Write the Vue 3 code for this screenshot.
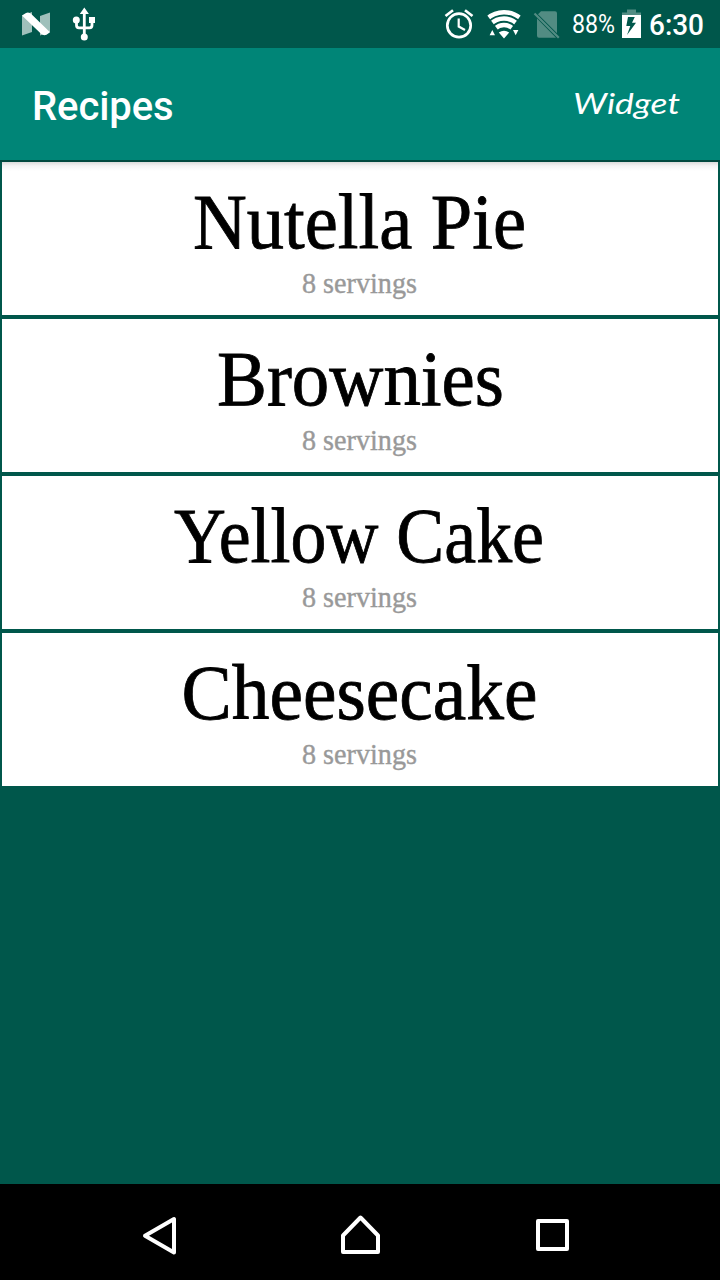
<script setup>
const recipes = [
  { name: 'Nutella Pie', x: 193, width: 333, servings: 8 },
  { name: 'Brownies', x: 217, width: 287, servings: 8 },
  { name: 'Yellow Cake', x: 174, width: 370, servings: 8 },
  { name: 'Cheesecake', x: 181.5, width: 356, servings: 8 }
]
</script>

<template>
  <div class="screen">
    <header class="status">
      <svg width="720" height="48" viewBox="0 0 720 48">
        <path d="M22 15.5 32 12V32L22 35.5ZM40 16 50 12.5V32L40 35.5Z" fill="#9fc0bb" />
        <path d="M22 15.5 26 13Q29 11.8 31.5 14.3L50 32.3 46.5 34.7Q43.5 36 41 33.7Z" fill="#fff" />
        <g fill="none" stroke="#fff" stroke-width="2.8">
          <path d="M84.3 12V37M76.5 20V25.3Q76.5 27.8 79 27.8H89.5Q92 27.8 92 25.3V20" />
        </g>
        <path d="M84.3 7.5 88.9 14H79.8ZM89 17H95V23H89Z" fill="#fff" />
        <circle cx="76.3" cy="20" r="3.5" fill="#fff" />
        <circle cx="84.3" cy="37" r="3.5" fill="#fff" />

        <g fill="none" stroke="#fff" stroke-width="2.7">
          <circle cx="459" cy="25.4" r="11.7" />
          <path d="M445.5 16 453 10.2M472.5 16 465 10.2" />
          <path d="M458.7 18.5V26.5L465 30" stroke-width="2.2" />
        </g>

        <clipPath id="fan"><path d="M504 38 486.5 14.5Q504 3 521.5 14.5Z" /></clipPath>
        <g clip-path="url(#fan)" fill="none" stroke="#fff" stroke-width="4.5">
          <circle cx="504" cy="37.5" r="25.3" />
          <circle cx="504" cy="37.5" r="18.9" />
          <circle cx="504" cy="37.5" r="12.5" />
        </g>
        <path d="M504 38.5 498.8 32.5Q504 29 509.2 32.5ZM492.3 30 495 35.2H489.6ZM515.7 35.2 518.4 30H513Z" fill="#fff" />

        <path d="M541 11.2H555Q557 11.2 557 13.2V33.2L538 14.2ZM537 18.5 556 37.8H539Q537 37.8 537 35.8Z" fill="#528c83" />
        <path d="M534.5 13.5 558.8 37.8" stroke="#528c83" stroke-width="2.2" />

        <text x="572" y="33" textLength="43" lengthAdjust="spacingAndGlyphs" class="percent">88%</text>
        <path d="M622 15V12.5H627V9.5H636V12.5H641V15Z" fill="#528c83" />
        <path fill-rule="evenodd" d="M622 15H641V38H622ZM628 17 626.3 26H630.3L627 35 636 22.7H632L634.8 17Z" fill="#fff" />
        <text x="649" y="35" textLength="55" lengthAdjust="spacingAndGlyphs" class="clock">6:30</text>
      </svg>
    </header>

    <div class="toolbar">
      <h1>Recipes</h1>
      <svg class="action" width="120" height="48" viewBox="0 0 120 48">
        <text x="3" y="31" textLength="107" lengthAdjust="spacingAndGlyphs">Widget</text>
      </svg>
    </div>

    <main class="list">
      <article v-for="recipe in recipes" :key="recipe.name" class="card">
        <svg width="716" height="153" viewBox="2 0 716 153">
          <text class="name" :x="recipe.x" y="86" :textLength="recipe.width" lengthAdjust="spacingAndGlyphs">{{ recipe.name }}</text>
          <text class="servings" x="302" y="130.5" textLength="115" lengthAdjust="spacingAndGlyphs">{{ recipe.servings }} servings</text>
        </svg>
      </article>
    </main>

    <nav class="nav">
      <svg width="720" height="96" viewBox="0 0 720 96" fill="none" stroke="#fff" stroke-width="4" stroke-linejoin="round">
        <path d="M174 35V68.5L145 51.7Z" />
        <path d="M343 51.5 360.5 33.5 378 51.5V68H343Z" />
        <path d="M538 37H567V65H538Z" />
      </svg>
    </nav>
  </div>
</template>

<style>
html,
body {
  margin: 0;
  background: #00574b;
}
</style>

<style scoped>
.screen {
  width: 720px;
  height: 1280px;
  display: flex;
  flex-direction: column;
  overflow: hidden;
  background: #00574b;
}
svg {
  display: block;
}
.status {
  height: 48px;
  flex: none;
}
.percent {
  font: 400 25px Roboto, sans-serif;
  fill: #fff;
}
.clock {
  font: 500 29px Roboto, sans-serif;
  fill: #fff;
}
.toolbar {
  height: 112px;
  flex: none;
  box-sizing: border-box;
  padding: 6px 30px 0 32px;
  display: flex;
  align-items: center;
  justify-content: space-between;
  background: #008577;
}
h1 {
  margin: 0;
  font: 500 40px/48px Roboto, sans-serif;
  letter-spacing: -0.1px;
  color: #fff;
}
.action text {
  font: italic 400 28px Lato, sans-serif;
  fill: #fff;
}
.list {
  flex: 1;
  padding: 2px 2px 0;
  display: flex;
  flex-direction: column;
  gap: 4px;
  background: linear-gradient(#00483e, #00483e) top / 100% 2px no-repeat;
}
.card {
  height: 153px;
  background: #fff;
}
.card:first-child {
  background: linear-gradient(#dadada, #f4f4f4 4px, #fff 9px);
}
.name {
  font: 400 78px "Liberation Serif", serif;
  fill: #000;
  stroke: #000;
  stroke-width: 0.8px;
}
.servings {
  font: 400 30px "Liberation Serif", serif;
  fill: #999;
  stroke: #999;
  stroke-width: 0.4px;
}
.nav {
  height: 96px;
  flex: none;
  background: #000;
}
</style>
